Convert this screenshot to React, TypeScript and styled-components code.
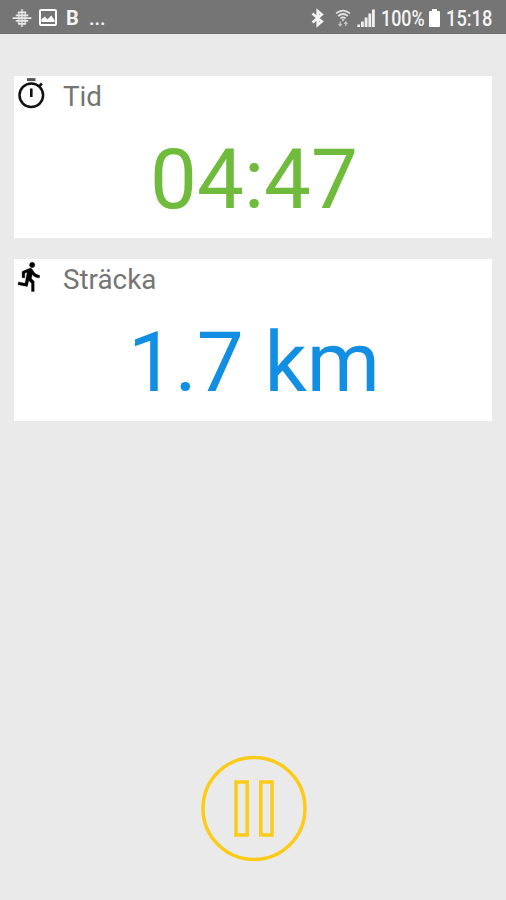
import React from "react";
import styled, { createGlobalStyle } from "styled-components";

const GlobalStyle = createGlobalStyle`
  * { box-sizing: border-box; }
  body { margin: 0; background: #eaeaea; font-family: Roboto, "Liberation Sans", sans-serif; }
`;

const Screen = styled.div`
  width: 506px;
  height: 900px;
  display: flex;
  flex-direction: column;
  background: #eaeaea;
  overflow: hidden;
`;

const StatusBar = styled.header`
  height: 34px;
  flex: none;
  display: flex;
  justify-content: space-between;
  padding: 0 14px 0 12px;
  background: #757575;
  border-bottom: 1px solid #6a6a6a;
  color: #f4f4f4;
`;

const StatusGroup = styled.div`
  display: flex;
  align-items: center;
  height: 35px;
  svg { display: block; flex: none; }
`;

const StatusText = styled.span<{ $size: number; $width: number; $gap?: number; $weight?: number }>`
  width: ${(p) => p.$width}px;
  margin-left: ${(p) => p.$gap ?? 0}px;
  font-size: ${(p) => p.$size}px;
  font-weight: ${(p) => p.$weight ?? 400};
  line-height: 35px;
  white-space: nowrap;
  transform: translateY(1px);
`;

const Condensed = styled.span<{ $scale: number }>`
  display: block;
  transform: scaleX(${(p) => p.$scale});
  transform-origin: left center;
`;

const Spacer = styled.span<{ $w: number }>`
  flex: none;
  width: ${(p) => p.$w}px;
`;

const Cards = styled.main`
  flex: 1;
  display: flex;
  flex-direction: column;
  gap: 21px;
  padding: 42px 14px 0;
`;

const Card = styled.section`
  height: 162px;
  background: #fff;
`;

const CardHeader = styled.div`
  display: flex;
  height: 41px;
  color: #757575;
  svg { display: block; flex: none; }
`;

const IconSlot = styled.div`
  width: 49px;
`;

const Label = styled.h2`
  margin: 0;
  font-size: 27.8px;
  font-weight: 400;
  line-height: 41px;
`;

const Value = styled.div<{ $color: string }>`
  margin-top: 13px;
  padding-left: 2px;
  font-size: 83.5px;
  line-height: 100px;
  text-align: center;
  color: ${(p) => p.$color};
`;

const Footer = styled.footer`
  display: flex;
  justify-content: center;
  padding: 0 0 38px 2px;
`;

const PauseButton = styled.button`
  width: 108px;
  height: 108px;
  padding: 0;
  border: 0;
  background: none;
  svg { display: block; }
`;

const FitnessIcon = () => (
  <svg width="20" height="20" viewBox="0 0 20 20" fill="#e8e8e8">
    <path d="M8.8 1h2.4v18H8.8zM5.8 4h2v12h-2zM12.2 4h2v12h-2z" opacity=".65" />
    <path d="M6 3.4h8v1.8H6zM3.8 6.4h12.4v1.8H3.8zM.6 9.2h18.8v1.8H.6zM3.8 12h12.4v1.8H3.8zM6 14.9h8v1.8H6z" />
  </svg>
);

const PictureIcon = () => (
  <svg width="18" height="17" viewBox="0 0 18 17">
    <rect x="1" y="1" width="16" height="15" rx="1" fill="none" stroke="#fff" strokeWidth="2" />
    <path d="M2.5 13V10L6 7.5l2.4 3 3.8-4L15.5 11v2z" fill="#fff" />
  </svg>
);

const BluetoothIcon = () => (
  <svg width="13" height="20" viewBox="0 0 13 20" fill="none" stroke="#f4f4f4" strokeWidth="2.6">
    <path d="M1.5 5.5 10.8 13.6l-4.1 3.4V3l4.1 3.4-9.3 8.1" />
  </svg>
);

const WifiIcon = () => (
  <svg width="16" height="18" viewBox="0 0 16 18" fill="none" stroke="#e2e2e2" strokeWidth="1.7">
    <path d="M1 4.3q7-5.4 14 0M3.2 7q4.8-4 9.6 0M5.4 9.4q2.6-2.2 5.2 0" />
    <path d="M6.4 10.2h3.2L8 12.4z" fill="#dedede" stroke="none" />
    <path d="M5.2 12.5v4M3.6 14.8l1.6 1.9 1.6-1.9M10.8 17v-4M9.2 14.8l1.6-1.9 1.6 1.9" strokeWidth="1.2" opacity=".75" />
  </svg>
);

const SignalIcon = () => (
  <svg width="18" height="18" viewBox="0 0 18 18" fill="#f0f0f0">
    <path d="M.3 15.5h2.7V18H.3zM4 12.5h2.8V18H4zM7.7 8.5h2.8V18H7.7zM11.4 4.5h2.8V18h-2.8zM15 .5h2.8V18H15z" />
  </svg>
);

const BatteryIcon = () => (
  <svg width="11" height="18" viewBox="0 0 11 18" fill="#fff">
    <path d="M3 0h5v2h2q1 0 1 1v14q0 1-1 1H1q-1 0-1-1V3q0-1 1-1h2z" />
  </svg>
);

const StopwatchIcon = () => (
  <svg width="34" height="36" viewBox="0 0 34 36" fill="none" stroke="#111">
    <path d="M13 3.6h8.5" stroke="#555" strokeWidth="3" />
    <circle cx="17.3" cy="19.3" r="11.8" strokeWidth="2.5" />
    <path d="M17.3 12.5v8.5" strokeWidth="2.6" />
    <path d="M24.7 10.8l3.2-3.3" strokeWidth="2.6" />
  </svg>
);

const RunnerIcon = () => (
  <svg width="34" height="36" viewBox="0 0 34 36">
    <g transform="translate(.1 1.2) scale(1.34 1.36)">
      <path
        fill="#000"
        stroke="#000"
        strokeWidth=".25"
        d="M13.49 5.48c1.1 0 2-.9 2-2s-.9-2-2-2-2 .9-2 2 .9 2 2 2zm-3.6 13.9 1-4.4 2.1 2v6h2v-7.5l-2.1-2 .6-3c1.3 1.5 3.3 2.5 5.5 2.5v-2c-1.9 0-3.5-1-4.3-2.4l-1-1.6c-.4-.6-1-1-1.7-1-.3 0-.5.1-.8.1l-5.2 2.2v4.7h2v-3.4l1.8-.7-1.6 8.1-4.9-1-.4 2 7 1.4z"
      />
    </g>
  </svg>
);

const PauseIcon = () => (
  <svg width="108" height="108" viewBox="0 0 108 108" fill="none" stroke="#fbcb18" strokeWidth="3.5">
    <circle cx="54" cy="54.4" r="51" />
    <rect x="36" y="28" width="11.2" height="53" />
    <rect x="60.8" y="28" width="11.2" height="53" />
  </svg>
);

interface MetricProps {
  icon: React.ReactNode;
  label: string;
  value: string;
  color: string;
}

const Metric = ({ icon, label, value, color }: MetricProps) => (
  <Card>
    <CardHeader>
      <IconSlot>{icon}</IconSlot>
      <Label>{label}</Label>
    </CardHeader>
    <Value $color={color}>{value}</Value>
  </Card>
);

export default function App() {
  return (
    <>
      <GlobalStyle />
      <Screen>
        <StatusBar>
          <StatusGroup>
            <FitnessIcon />
            <Spacer $w={7} />
            <PictureIcon />
            <StatusText $size={20} $width={14} $gap={9} $weight={700}>B</StatusText>
            <StatusText $size={20} $width={18} $gap={9} $weight={500}>...</StatusText>
          </StatusGroup>
          <StatusGroup>
            <BluetoothIcon />
            <Spacer $w={11} />
            <WifiIcon />
            <Spacer $w={6} />
            <SignalIcon />
            <StatusText $size={21.5} $width={43} $gap={6} $weight={500}>
              <Condensed $scale={0.83}>100%</Condensed>
            </StatusText>
            <Spacer $w={5} />
            <BatteryIcon />
            <StatusText $size={21.5} $width={46} $gap={6} $weight={500}>
              <Condensed $scale={0.85}>15:18</Condensed>
            </StatusText>
          </StatusGroup>
        </StatusBar>
        <Cards>
          <Metric icon={<StopwatchIcon />} label="Tid" value="04:47" color="#6fbb3b" />
          <Metric icon={<RunnerIcon />} label="Sträcka" value="1.7 km" color="#128fe3" />
        </Cards>
        <Footer>
          <PauseButton aria-label="Pausa">
            <PauseIcon />
          </PauseButton>
        </Footer>
      </Screen>
    </>
  );
}
